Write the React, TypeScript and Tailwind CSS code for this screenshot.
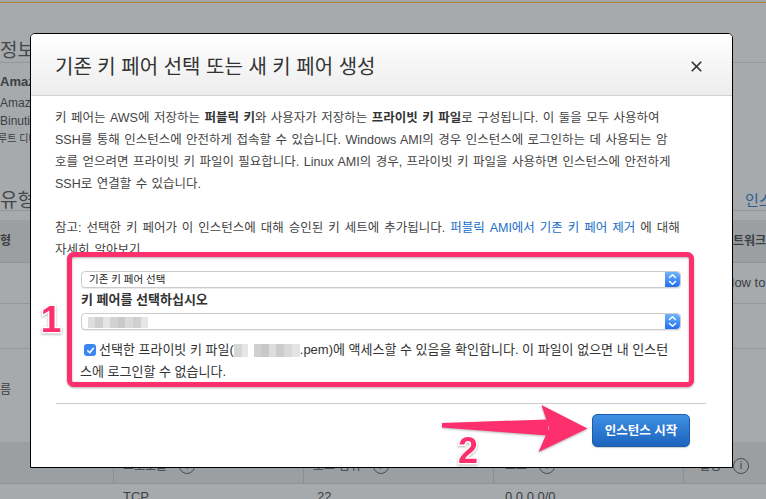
import { X } from 'lucide-react';

const FONT = "font-['Liberation_Sans','Noto_Sans_CJK_KR',sans-serif]";

// pixelated (redacted) text blocks
const Mosaic = ({ cells, h }: { cells: [number, string][]; h: string }) => (
  <span className={`inline-flex align-middle blur-[0.5px] ${h}`}>
    {cells.map(([w, c], i) => (
      <span key={i} className="h-full" style={{ width: w, background: c }} />
    ))}
  </span>
);

const keyName: [number, string][] = [
  [7, '#dedede'], [8, '#cfcfcf'], [7, '#e4e4e4'], [8, '#d2d2d2'], [7, '#c9c9c9'],
  [8, '#dadada'], [8, '#d0d0d0'], [7, '#e6e6e6'],
];
const fileName: [number, string][] = [
  [8, '#d6d6d6'], [6, '#e6e6e6'], [6, '#ffffff'], [7, '#d0d0d0'], [8, '#c8c8c8'],
  [7, '#dddddd'], [8, '#cccccc'], [8, '#d9d9d9'], [8, '#e3e3e3'],
];

const Info = () => (
  <span className="ml-[12px] inline-flex h-[16px] w-[16px] shrink-0 items-center justify-center rounded-full border border-[#4a4d50] text-[11px] leading-none">
    i
  </span>
);

const Stepper = () => (
  <div className="flex h-full w-[15px] items-center justify-center rounded-r-[4px] bg-gradient-to-b from-[#6fb4fb] to-[#1f6ef0]">
    <svg width="9" height="13" viewBox="0 0 9 13" fill="none" stroke="white" strokeWidth="1.5" strokeLinecap="round" strokeLinejoin="round">
      <path d="M1.5 4.5 L4.5 1.8 L7.5 4.5" />
      <path d="M1.5 8.5 L4.5 11.2 L7.5 8.5" />
    </svg>
  </div>
);

export default function App() {
  return (
    <div className={`relative h-[499px] w-[766px] overflow-hidden bg-[#a6aaad] text-[#3c3f42] ${FONT}`}>
      {/* page behind the modal */}
      <div className="h-[2px] bg-[#a1a5a8]" />
      <div className="h-px bg-[#b57c3f]" />
      <div className="flex h-[60px] items-end border-b border-[#95989b] pb-[2px]">
        <span className="text-[19px] leading-[18px] text-[#45484b]">정보</span>
      </div>
      <div className="flex flex-col whitespace-nowrap">
        <div className="mt-[10px] h-[18px] text-[13px] font-bold leading-[18px]">Amazon Linux 2 AMI</div>
        <div className="mt-[3px] h-[18px] text-[12px] leading-[18px]">Amazon Linux 2 AMI (HVM)</div>
        <div className="h-[18px] text-[12px] leading-[18px]">Binutils</div>
        <div className="-ml-[2px] h-[18px] text-[10px] leading-[18px]">루트 디바이스 유형</div>
      </div>
      <div className="flex h-[63px] items-end border-b border-[#95989b]">
        <span className="w-[745px] shrink-0 text-[19px] leading-[18px] text-[#45484b]">유형</span>
        <span className="shrink-0 whitespace-nowrap text-[15px] leading-[18px] text-[#2d5f93]">인스턴스</span>
      </div>
      <div className="h-[9px]" />
      <div className="flex h-[43px] items-center border-b border-[#919497] bg-[#9b9fa2] text-[12px] font-bold">
        <span className="w-[722px] shrink-0">형</span>
        <span className="shrink-0 whitespace-nowrap">네트워크</span>
      </div>
      <div className="flex h-[41px] items-center border-b border-[#95989b] text-[13px]">
        <span className="w-[725px] shrink-0" />
        <span className="shrink-0 whitespace-nowrap">How to</span>
      </div>
      <div className="h-[45px] border-b border-[#95989b]" />
      <div className="h-[93px] pt-[33px] text-[12px] leading-[16px]">름</div>
      <div className="grid h-[42px] grid-cols-[113px_190px_190px_190px_83px] border-b border-[#8f9295] bg-[#9b9fa2] text-[12px]">
        <div />
        <div className="flex items-center border-l border-[#8c8f92] pl-[9px] pt-[6px]">프로토콜<Info /></div>
        <div className="flex items-center border-l border-[#8c8f92] pl-[9px] pt-[6px]">포트 범위<Info /></div>
        <div className="flex items-center border-l border-[#8c8f92] pl-[11px] pt-[6px]">소스<Info /></div>
        <div className="flex items-center whitespace-nowrap border-l border-[#8c8f92] pl-[15px] pt-[6px]">설명<Info /></div>
      </div>
      <div className="grid grid-cols-[113px_190px_190px_190px_83px] pt-[5px] text-[13px] leading-[16px]">
        <div />
        <div className="pl-[10px]">TCP</div>
        <div className="pl-[14px]">22</div>
        <div className="pl-[12px]">0.0.0.0/0</div>
        <div />
      </div>

      {/* modal */}
      <div className="absolute left-[30px] top-[33px] flex h-[435px] w-[703px] flex-col rounded-t-[5px] border border-black bg-white text-[#444]">
        <div className="flex h-[62px] items-center justify-between rounded-t-[4px] border-b border-[#d2d2d2] bg-gradient-to-b from-white to-[#ededed] pl-[24px] pr-[27px] pt-[4px]">
          <h2 className="text-[20px] font-normal text-[#333]">기존 키 페어 선택 또는 새 키 페어 생성</h2>
          <X size={17} strokeWidth={2.4} className="text-[#333]" />
        </div>
        <div className="flex flex-1 flex-col pl-[24px] pr-[26px] pt-[11px] text-[12.5px] leading-[22px]">
          <div className="whitespace-nowrap [word-spacing:1px]">
            <div>키 페어는 AWS에 저장하는 <b className="font-bold text-[#333]">퍼블릭 키</b>와 사용자가 저장하는 <b className="font-bold text-[#333]">프라이빗 키 파일</b>로 구성됩니다. 이 둘을 모두 사용하여</div>
            <div>SSH를 통해 인스턴스에 안전하게 접속할 수 있습니다. Windows AMI의 경우 인스턴스에 로그인하는 데 사용되는 암</div>
            <div>호를 얻으려면 프라이빗 키 파일이 필요합니다. Linux AMI의 경우, 프라이빗 키 파일을 사용하면 인스턴스에 안전하게</div>
            <div>SSH로 연결할 수 있습니다.</div>
          </div>
          <div className="mt-[22px] whitespace-nowrap [word-spacing:1.5px]">
            <div>
              참고: 선택한 키 페어가 이 인스턴스에 대해 승인된 키 세트에 추가됩니다.{' '}
              <a className="text-[#1a6ec6]">퍼블릭 AMI에서 기존 키 페어 제거</a> 에 대해
            </div>
            <div>자세히 알아보기</div>
          </div>

          <div className="ml-[26px] mr-[25px] mt-[10px] flex flex-col">
            <div className="flex h-[17px] items-center justify-between rounded-[4px] border border-[#cdcdcd] bg-white shadow-[0_1px_0_rgba(0,0,0,0.08)]">
              <span className="pl-[7px] text-[10.5px] leading-none text-[#222]">기존 키 페어 선택</span>
              <Stepper />
            </div>
            <div className="mt-[2px] text-[13px] font-bold leading-[20px] text-[#333]">키 페어를 선택하십시오</div>
            <div className="mt-[3px] flex h-[17px] items-center justify-between rounded-[4px] border border-[#cdcdcd] bg-white shadow-[0_1px_0_rgba(0,0,0,0.08)]">
              <span className="pl-[6px]">
                <Mosaic cells={keyName} h="h-[11px]" />
              </span>
              <Stepper />
            </div>
            <div className="mt-[9px] whitespace-nowrap text-[13px] leading-[22px] text-[#333]">
              <div className="flex items-center">
                <span className="ml-[3px] mr-[3px] flex h-[12px] w-[12px] items-center justify-center rounded-[3px] bg-[#3b86f5]">
                  <svg width="9" height="9" viewBox="0 0 9 9" fill="none" stroke="white" strokeWidth="1.6" strokeLinecap="round" strokeLinejoin="round">
                    <path d="M1.8 4.8 L3.8 6.8 L7.3 2.3" />
                  </svg>
                </span>
                <span>선택한 프라이빗 키 파일(</span>
                <Mosaic cells={fileName} h="h-[13px]" />
                <span>.pem)에 액세스할 수 있음을 확인합니다. 이 파일이 없으면 내 인스턴</span>
              </div>
              <div className="-ml-px">스에 로그인할 수 없습니다.</div>
            </div>
          </div>

          <div className="ml-px mt-[20px] border-t border-[#cccccc]" />
          <div className="mt-[10px] flex justify-end pr-[16px]">
            <button className="h-[33px] w-[98px] rounded-[5px] border border-[#1b5cad] bg-gradient-to-b from-[#3f91e4] to-[#1c63bd] text-[12.5px] font-bold text-white shadow-[0_1px_1px_rgba(0,0,0,0.2)]">
              인스턴스 시작
            </button>
          </div>
        </div>
      </div>

      {/* annotations drawn over the screenshot */}
      <svg
        className="pointer-events-none absolute inset-0 drop-shadow-[0_1px_1px_rgba(0,0,0,0.3)]"
        width="766"
        height="499"
        viewBox="0 0 766 499"
      >
        <rect x="69.5" y="254.5" width="622" height="130" rx="4" fill="none" stroke="#fd2f6d" strokeWidth="5" />
        <path d="M442 423 L548 419.5 L548 435.5 L442 427.5 Z" fill="#fd2f6d" />
        <path d="M541.5 405 L587.5 428.5 L538.5 452 L549 428 Z" fill="#fd2f6d" />
        <text
          x="51"
          y="332"
          textAnchor="middle"
          fontFamily="Liberation Sans, Arial, sans-serif"
          fontWeight="bold"
          fontSize="37"
          fill="#fd2f6d"
          stroke="white"
          strokeWidth="3"
          paintOrder="stroke"
        >
          1
        </text>
        <text
          x="468"
          y="463"
          textAnchor="middle"
          fontFamily="Liberation Sans, Arial, sans-serif"
          fontWeight="bold"
          fontSize="36"
          fill="#fd2f6d"
          stroke="white"
          strokeWidth="3"
          paintOrder="stroke"
        >
          2
        </text>
      </svg>
    </div>
  );
}
